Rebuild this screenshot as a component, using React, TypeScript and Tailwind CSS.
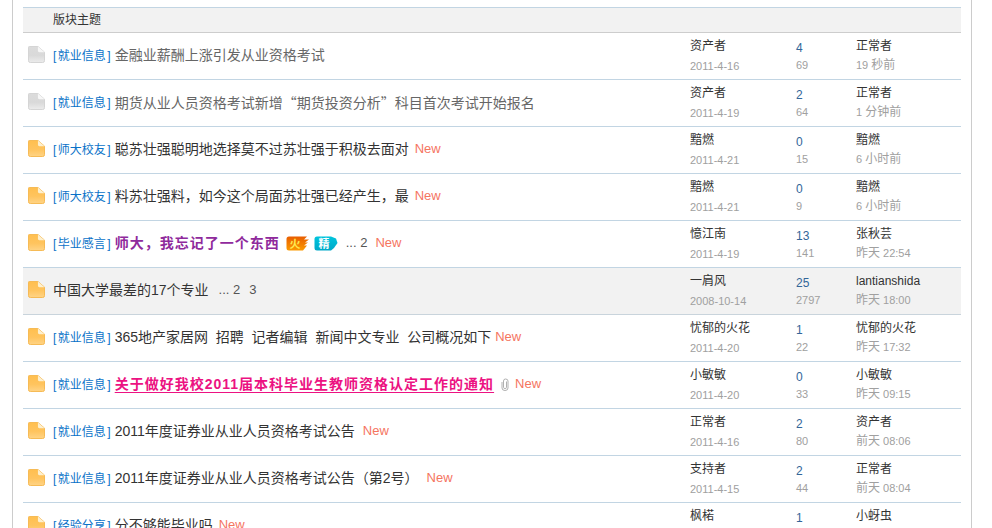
import type { ReactNode } from "react";

type Row = {
  icon?: "gray" | "orange";
  tag?: string;
  title: ReactNode;
  extra?: ReactNode;
  author: string;
  date: string;
  replies: string;
  views: string;
  last: string;
  time: ReactNode;
  shaded?: boolean;
};

function FileIcon({ kind }: { kind: "gray" | "orange" }) {
  const gray = kind === "gray";
  const id = gray ? "fg" : "fo";
  return (
    <svg width="17" height="17" viewBox="0 0 18 18" className="shrink-0">
      <defs>
        <linearGradient id={id} x1="0" y1="0" x2="0" y2="1">
          <stop offset="0" stopColor={gray ? "#dcdcdc" : "#ffbf4f"} />
          <stop offset="0.55" stopColor={gray ? "#d9d9d9" : "#ffc45e"} />
          <stop offset="1" stopColor={gray ? "#ececec" : "#ffd486"} />
        </linearGradient>
      </defs>
      <path
        d="M1.5 .5H10.5L17.5 6.5V15.5Q17.5 17.5 15.5 17.5H2.5Q.5 17.5 .5 15.5V1.5Q.5 .5 1.5 .5Z"
        fill={`url(#${id})`}
        stroke={gray ? "#d2d2d2" : "#f5b74e"}
      />
      <path d="M10.5 .5L17.5 6.5H12Q10.5 6.5 10.5 5Z" fill={gray ? "#f7f7f7" : "#fdf0cf"} />
    </svg>
  );
}

function Badge({ kind }: { kind: "fire" | "best" }) {
  const fire = kind === "fire";
  const id = fire ? "bf" : "bb";
  return (
    <svg width="24" height="15" viewBox="0 0 24 15" className="block shrink-0">
      <defs>
        <linearGradient id={id} x1="0" y1="0" x2="0" y2="1">
          <stop offset="0" stopColor={fire ? "#e85d00" : "#00c4dc"} />
          <stop offset="1" stopColor={fire ? "#fb9a00" : "#00a8c8"} />
        </linearGradient>
      </defs>
      {fire ? (
        <path d="M3 .5H21L18 3.5H23L19 6.5H22L18 9.5H21L17 14.5H3Q.5 14.5 .5 12V3Q.5 .5 3 .5Z" fill={`url(#${id})`} />
      ) : (
        <path d="M3 .5H17L22 2.5L23.5 7L20 12L17 14.5H3Q.5 14.5 .5 12V3Q.5 .5 3 .5Z" fill={`url(#${id})`} />
      )}
      <text
        x={fire ? 9 : 10}
        y="11.5"
        textAnchor="middle"
        fontSize="11"
        fontWeight={700}
        fill={fire ? "#ffe94f" : "#ffffff"}
        fontFamily="'Noto Sans CJK SC', sans-serif"
      >
        {fire ? "火" : "精"}
      </text>
    </svg>
  );
}

function Clip() {
  return (
    <svg width="8" height="13" viewBox="0 0 8 13" fill="none" stroke="#b0b0b0" strokeWidth="1" className="ml-[7px] shrink-0">
      <path d="M5.5 3.5V9.5Q5.5 10.5 4 10.5Q2.5 10.5 2.5 9.5V3Q2.5 1 4.5 1Q7 1 7 3V10Q7 12.5 4 12.5Q1 12.5 1 10V4" />
    </svg>
  );
}

const New = ({ ml }: { ml: string }) => <span className={`text-[13px] text-[#f5755f] ${ml}`}>New</span>;
const Pg = ({ children, ml }: { children: ReactNode; ml: string }) => (
  <span className={`text-[13px] text-[#555] ${ml}`}>{children}</span>
);
const L = ({ children }: { children: ReactNode }) => <span className="text-[11px]">{children}</span>;

const rows: Row[] = [
  {
    icon: "gray",
    tag: "就业信息",
    title: <span className="text-[#666]">金融业薪酬上涨引发从业资格考试</span>,
    author: "资产者",
    date: "2011-4-16",
    replies: "4",
    views: "69",
    last: "正常者",
    time: <><L>19 </L>秒前</>,
  },
  {
    icon: "gray",
    tag: "就业信息",
    title: (
      <span className="font-['Noto_Sans_CJK_SC',sans-serif] text-[#666]" lang="zh-CN">
        期货从业人员资格考试新增“期货投资分析”科目首次考试开始报名
      </span>
    ),
    author: "资产者",
    date: "2011-4-19",
    replies: "2",
    views: "64",
    last: "正常者",
    time: <><L>1 </L>分钟前</>,
  },
  {
    tag: "师大校友",
    title: "聪苏壮强聪明地选择莫不过苏壮强于积极去面对",
    extra: <New ml="ml-[6px]" />,
    author: "黯燃",
    date: "2011-4-21",
    replies: "0",
    views: "15",
    last: "黯燃",
    time: <><L>6 </L>小时前</>,
  },
  {
    tag: "师大校友",
    title: "料苏壮强料，如今这个局面苏壮强已经产生，最",
    extra: <New ml="ml-[6px]" />,
    author: "黯燃",
    date: "2011-4-21",
    replies: "0",
    views: "9",
    last: "黯燃",
    time: <><L>6 </L>小时前</>,
  },
  {
    tag: "毕业感言",
    title: <span className="font-bold tracking-[1px] text-[#8f2a9c]">师大，我忘记了一个东西</span>,
    extra: (
      <>
        <span className="ml-[6px]"><Badge kind="fire" /></span>
        <span className="ml-[4px]"><Badge kind="best" /></span>
        <Pg ml="ml-[8px]">... 2</Pg>
        <New ml="ml-[8px]" />
      </>
    ),
    author: "憶江南",
    date: "2011-4-19",
    replies: "13",
    views: "141",
    last: "张秋芸",
    time: <>昨天<L> 22:54</L></>,
  },
  {
    title: "中国大学最差的17个专业",
    extra: (
      <>
        <Pg ml="ml-[10px]">... 2</Pg>
        <Pg ml="ml-[9px]">3</Pg>
      </>
    ),
    author: "一肩风",
    date: "2008-10-14",
    replies: "25",
    views: "2797",
    last: "lantianshida",
    time: <>昨天<L> 18:00</L></>,
    shaded: true,
  },
  {
    tag: "就业信息",
    title: "365地产家居网  招聘  记者编辑  新闻中文专业  公司概况如下",
    extra: <New ml="ml-[4px]" />,
    author: "忧郁的火花",
    date: "2011-4-20",
    replies: "1",
    views: "22",
    last: "忧郁的火花",
    time: <>昨天<L> 17:32</L></>,
  },
  {
    tag: "就业信息",
    title: (
      <span className="font-bold tracking-[1px] text-[#ec1282] underline underline-offset-[3px]">
        关于做好我校2011届本科毕业生教师资格认定工作的通知
      </span>
    ),
    extra: (
      <>
        <Clip />
        <New ml="ml-[6px]" />
      </>
    ),
    author: "小敏敏",
    date: "2011-4-20",
    replies: "0",
    views: "33",
    last: "小敏敏",
    time: <>昨天<L> 09:15</L></>,
  },
  {
    tag: "就业信息",
    title: "2011年度证券业从业人员资格考试公告",
    extra: <New ml="ml-[8px]" />,
    author: "正常者",
    date: "2011-4-16",
    replies: "2",
    views: "80",
    last: "资产者",
    time: <>前天<L> 08:06</L></>,
  },
  {
    tag: "就业信息",
    title: "2011年度证券业从业人员资格考试公告（第2号）",
    extra: <New ml="ml-[8px]" />,
    author: "支持者",
    date: "2011-4-15",
    replies: "2",
    views: "44",
    last: "正常者",
    time: <>前天<L> 08:04</L></>,
  },
  {
    tag: "经验分享",
    title: "分不够能毕业吗",
    extra: <New ml="ml-[6px]" />,
    author: "枫楉",
    date: "2011-4-15",
    replies: "1",
    views: "20",
    last: "小蚜虫",
    time: <>前天<L> 08:00</L></>,
  },
];

export default function App() {
  return (
    <div className="h-[528px] w-[992px] overflow-hidden bg-white font-['Liberation_Sans','Noto_Sans_CJK_SC',sans-serif] text-[12px] text-[#333]">
      <div className="ml-[12px] min-h-[528px] w-[960px] border-x border-[#ccc] px-[10px] pt-[7px]">
        <div className="flex h-[26px] items-center border-y border-t-[#c2d5e3] border-b-[#cdcdcd] bg-[#f2f2f2] pb-[1px] pl-[30px] text-[12px]">
          版块主题
        </div>
        {rows.map((r, i) => (
          <div
            key={i}
            className={`flex h-[47px] border-b ${r.shaded ? "border-[#c9d4dc] bg-[#f2f2f2]" : "border-[#c2d5e3]"}`}
          >
            <div className="flex w-[30px] shrink-0 items-center pb-[3px] pl-[5px]">
              <FileIcon kind={r.icon ?? "orange"} />
            </div>
            <div className="flex w-[637px] shrink-0 items-center whitespace-pre pb-[2px] text-[14px] leading-[20px]">
              {r.tag && (
                <span className="mr-[4px] pt-[1px] text-[12px] text-[#0a72c8]">
                  [<span className="mx-[1.5px]">{r.tag}</span>]
                </span>
              )}
              {r.title}
              {r.extra}
            </div>
            <div className="flex w-[106px] shrink-0 flex-col justify-center leading-[20px]">
              <span className="text-[#333]">{r.author}</span>
              <span className="text-[11px] text-[#a0a0a0]">{r.date}</span>
            </div>
            <div className="flex w-[60px] shrink-0 flex-col pt-[5px]">
              <span className="text-[12px] leading-[20px] text-[#336699]">{r.replies}</span>
              <span className="text-[11px] leading-[14px] text-[#a0a0a0]">{r.views}</span>
            </div>
            <div className="flex flex-1 flex-col justify-center leading-[19px]">
              <span className="text-[#333]">{r.last}</span>
              <span className="text-[#a0a0a0]">{r.time}</span>
            </div>
          </div>
        ))}
      </div>
    </div>
  );
}
